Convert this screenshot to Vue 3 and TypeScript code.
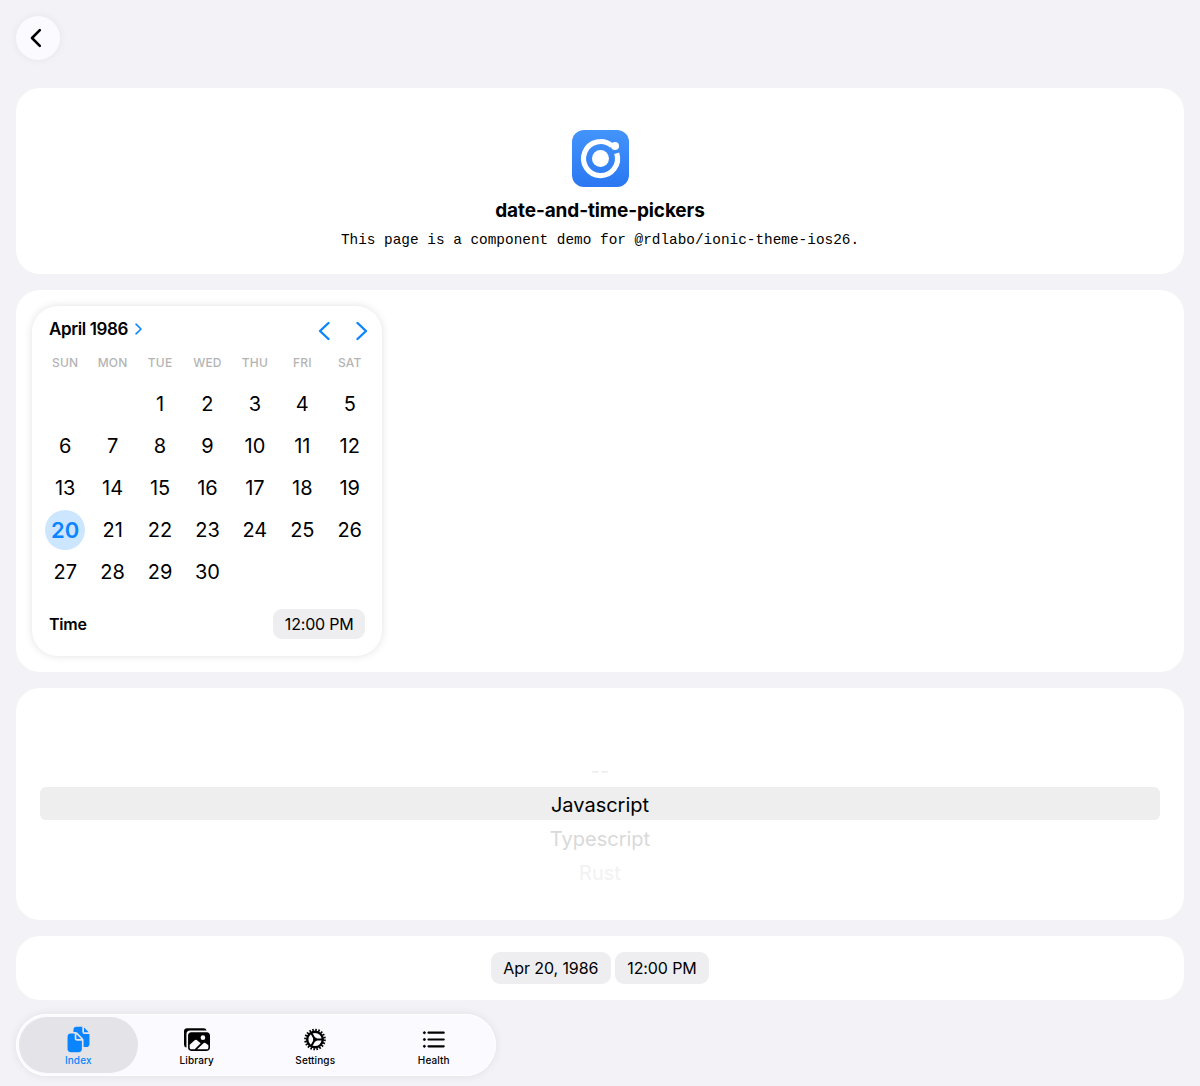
<script setup lang="ts">
const weekdays = ['SUN', 'MON', 'TUE', 'WED', 'THU', 'FRI', 'SAT']
const blanks = [1, 2]
const days = Array.from({ length: 30 }, (_, i) => i + 1)
const options = [
  { label: '--', cls: 'opt--dash' },
  { label: 'Javascript', cls: 'opt--active' },
  { label: 'Typescript', cls: 'opt--near' },
  { label: 'Rust', cls: 'opt--far' },
]
</script>

<template>
  <div class="page">
    <header class="toolbar">
      <button class="back" aria-label="Back">
        <svg viewBox="0 0 24 24" width="24" height="24" fill="none" stroke="#000" stroke-width="2.600" stroke-linecap="round" stroke-linejoin="round">
          <path d="M13.800 4.200 6 12l7.800 7.800" />
        </svg>
      </button>
    </header>

    <main class="content">
      <section class="card hero">
        <svg class="logo" viewBox="0 0 57 57" width="57" height="57">
          <defs>
            <linearGradient id="logo-bg" x1="0" y1="0" x2="0" y2="1">
              <stop offset="0" stop-color="#4394fb" />
              <stop offset="1" stop-color="#2a77f2" />
            </linearGradient>
          </defs>
          <rect width="57" height="57" rx="12" fill="url(#logo-bg)" />
          <path d="M39.900 15.900A17 17 0 1 0 44.700 23.250" fill="none" stroke="#fff" stroke-width="5.200" />
          <circle cx="28.500" cy="28.500" r="8.500" fill="#fff" />
          <circle cx="43" cy="16" r="4" fill="#fff" />
        </svg>
        <h1>date-and-time-pickers</h1>
        <p>This page is a component demo for @rdlabo/ionic-theme-ios26.</p>
      </section>

      <section class="card datetime-card">
        <div class="datetime">
          <div class="cal-head">
            <div class="month">
              April 1986
              <svg viewBox="0 0 10 14" width="10" height="14" fill="none" stroke="#0a84ff" stroke-width="1.600" stroke-linecap="round" stroke-linejoin="round">
                <path d="M2 2.200 7 7l-5 4.800" />
              </svg>
            </div>
            <div class="arrows">
              <svg viewBox="0 0 14 20" width="14" height="20" fill="none" stroke="#0a84ff" stroke-width="2.400" stroke-linecap="round" stroke-linejoin="round">
                <path d="M11.500 2 3 10l8.500 8" />
              </svg>
              <svg viewBox="0 0 14 20" width="14" height="20" fill="none" stroke="#0a84ff" stroke-width="2.400" stroke-linecap="round" stroke-linejoin="round">
                <path d="M2.500 2 11 10l-8.500 8" />
              </svg>
            </div>
          </div>
          <div class="weekdays">
            <span v-for="d in weekdays" :key="d">{{ d }}</span>
          </div>
          <div class="days">
            <span v-for="b in blanks" :key="'b' + b" />
            <span v-for="d in days" :key="d" class="day" :class="{ 'day--active': d === 20 }">
              <i>{{ d }}</i>
            </span>
          </div>
          <div class="time-row">
            <span class="time-label">Time</span>
            <span class="chip chip--small">12:00 PM</span>
          </div>
        </div>
      </section>

      <section class="card picker-card">
        <div class="picker">
          <div v-for="o in options" :key="o.label" class="opt" :class="o.cls">{{ o.label }}</div>
        </div>
      </section>

      <section class="card chips">
        <span class="chip">Apr 20, 1986</span>
        <span class="chip">12:00 PM</span>
      </section>
    </main>

    <nav class="tabbar">
      <div class="tab tab--active">
        <svg viewBox="0 0 512 512" width="27" height="27" fill="currentColor">
          <path d="M298.390 248a4 4 0 002.860-6.800l-78.400-79.720a4 4 0 00-6.850 2.810V236a12 12 0 0012 12z" />
          <path d="M197 267a43.670 43.670 0 01-13-31v-92h-72a64.190 64.190 0 00-64 64v224a64 64 0 0064 64h144a64 64 0 0064-64V280h-92a43.610 43.610 0 01-31-13zM372 120h70.390a4 4 0 002.860-6.800l-78.400-79.720a4 4 0 00-6.850 2.810V108a12 12 0 0012 12z" />
          <path d="M372 152a44.340 44.340 0 01-44-44V16H220a60.070 60.070 0 00-60 60v36h42.120A40.810 40.810 0 01231 124.140l109.160 111a41.110 41.110 0 0111.830 29V400h53.050c32.510 0 58.950-26.920 58.950-60V152z" />
        </svg>
        <span>Index</span>
      </div>
      <div class="tab">
        <svg viewBox="0 0 512 512" width="26" height="26" fill="currentColor">
          <path d="M450.290 112H142c-34 0-62 27.510-62 61.330v245.340c0 33.820 28 61.330 62 61.330h308c34 0 62-26.180 62-60V173.330c0-33.820-27.670-61.330-61.710-61.330zm-77.150 61.340a46 46 0 11-46.280 46 46.190 46.190 0 0146.280-46zm-231.550 276c-17 0-29.860-13.750-29.860-30.660v-59.510l92.310-82.050a46.220 46.220 0 0163.270 1.780L328 329.580 211.280 449.340zM480 418.670c0 16.910-11.290 30.670-28.340 30.670H259l117.130-116.690a45.820 45.820 0 0159-.15L480 370.330z" />
          <path d="M384 32H64A64 64 0 000 96v256a64.110 64.110 0 0048 62V152a72 72 0 0172-72h326a64.110 64.110 0 00-62-48z" />
        </svg>
        <span>Library</span>
      </div>
      <div class="tab">
        <svg viewBox="0 0 24 24" width="24" height="24" fill="none" stroke="currentColor">
          <circle cx="12" cy="12" r="9.600" stroke-width="2.400" stroke-dasharray="1.550 1.464" />
          <circle cx="12" cy="12" r="7.800" stroke-width="2.400" />
          <circle cx="12" cy="12" r="2" fill="currentColor" stroke="none" />
          <path d="M12 12V4.500M12 12l6.500 3.700M12 12l-6.500 3.700" stroke-width="2" transform="rotate(90 12 12)" />
        </svg>
        <span>Settings</span>
      </div>
      <div class="tab">
        <svg viewBox="0 0 24 24" width="24" height="24" fill="currentColor" stroke="currentColor">
          <path d="M6.500 5.200h15.200M6.500 12h15.200M6.500 18.800h15.200" fill="none" stroke-width="2.200" stroke-linecap="round" />
          <circle cx="2.400" cy="5.200" r="1" />
          <circle cx="2.400" cy="12" r="1" />
          <circle cx="2.400" cy="18.800" r="1" />
        </svg>
        <span>Health</span>
      </div>
    </nav>
  </div>
</template>

<style>
html,
body {
  margin: 0;
  background: #f2f2f7;
}
</style>

<style scoped>
.page {
  width: 1200px;
  height: 1086px;
  overflow: hidden;
  background: #f2f2f7;
  color: #000;
  font-family: Inter, "Liberation Sans", sans-serif;
  box-sizing: border-box;
  padding: 16px 16px 0;
}

.toolbar {
  height: 44px;
  margin-bottom: 28px;
}

.back {
  width: 44px;
  height: 44px;
  padding: 0;
  border: 0;
  border-radius: 50%;
  background: #fafaff;
  box-shadow: 0 0 8px rgb(0 0 0 / 6%);
  display: flex;
  align-items: center;
  justify-content: center;
}

.content {
  display: flex;
  flex-direction: column;
  gap: 16px;
}

.card {
  background: #fff;
  border-radius: 24px;
}

.hero {
  height: 186px;
  box-sizing: border-box;
  padding-top: 42px;
  display: flex;
  flex-direction: column;
  align-items: center;
}

.logo {
  display: block;
}

.hero h1 {
  margin: 12px 0 0;
  font-size: 19px;
  line-height: 24px;
  font-weight: 700;
  letter-spacing: -0.12px;
}

.hero p {
  margin: 8px 0 0;
  font-family: "Liberation Mono", monospace;
  font-size: 14.400px;
  line-height: 18px;
}

.datetime-card {
  height: 382px;
  box-sizing: border-box;
  padding: 16px;
}

.datetime {
  width: 350px;
  height: 350px;
  box-sizing: border-box;
  border-radius: 26px;
  background: #fff;
  box-shadow: 0 0 8px rgb(0 0 0 / 12%);
  padding: 0 9.500px;
}

.cal-head {
  height: 48px;
  padding: 0 3.500px 0 7.500px;
  display: flex;
  align-items: center;
  justify-content: space-between;
}

.month {
  display: flex;
  align-items: center;
  gap: 6px;
  font-size: 17px;
  font-weight: 600;
  letter-spacing: -0.4px;
  margin-top: -2px;
}

.arrows {
  display: flex;
  gap: 24px;
  margin-top: 2px;
}

.weekdays,
.days {
  display: grid;
  grid-template-columns: repeat(7, 47.430px);
}

.weekdays {
  height: 20px;
  margin-top: -2px;
  align-items: center;
  text-align: center;
  font-size: 12px;
  font-weight: 500;
  color: #b4b4b4;
  letter-spacing: 0.2px;
}

.days {
  margin-top: 11px;
  grid-auto-rows: 42px;
}

.day {
  display: flex;
  align-items: center;
  justify-content: center;
  font-size: 20px;
}

.day i {
  font-style: normal;
  width: 40px;
  height: 40px;
  border-radius: 50%;
  display: flex;
  align-items: center;
  justify-content: center;
}

.day--active i {
  background: #cde6ff;
  color: #0a84ff;
  font-size: 22px;
  font-weight: 600;
}

.time-row {
  margin-top: 16px;
  padding: 0 7.500px;
  display: flex;
  align-items: center;
  justify-content: space-between;
}

.time-label {
  font-size: 16px;
  font-weight: 600;
  letter-spacing: -0.2px;
}

.chip {
  display: inline-flex;
  align-items: center;
  justify-content: center;
  height: 32px;
  padding: 0 12.500px;
  border-radius: 9px;
  background: #eeeef0;
  font-size: 16px;
  letter-spacing: -0.1px;
}

.chip--small {
  height: 30px;
  padding: 0 11.500px;
  letter-spacing: -0.2px;
}

.picker-card {
  height: 232px;
  box-sizing: border-box;
  padding: 65px 24px 0;
}

.picker {
  display: flex;
  flex-direction: column;
  align-items: center;
}

.opt {
  height: 34px;
  line-height: 34px;
  font-size: 20px;
  text-align: center;
  width: 100%;
}

.opt--dash {
  line-height: 36px;
  color: #eee;
}

.opt--active {
  height: 33px;
  line-height: 36px;
  background: #eeeeee;
  border-radius: 6px;
}

.opt--near {
  margin-top: 2px;
  color: #d9d9d9;
}

.opt--far {
  color: #f2f2f2;
}

.chips {
  height: 64px;
  display: flex;
  align-items: center;
  justify-content: center;
  gap: 4px;
}

.tabbar {
  position: absolute;
  left: 16px;
  top: 1014px;
  width: 480px;
  height: 62px;
  box-sizing: border-box;
  padding: 3px;
  display: grid;
  grid-template-columns: repeat(4, 118.500px);
  border-radius: 31px;
  background: #fafaff;
  box-shadow: 0 0 10px rgb(0 0 0 / 8%), inset 0 0 0 1px #fff;
}

.tab {
  display: flex;
  flex-direction: column;
  align-items: center;
  font-size: 10px;
  font-weight: 500;
  line-height: 12px;
  border-radius: 28px;
  color: #000;
  padding-top: 9px;
}

.tab svg {
  height: 27px;
  display: block;
}

.tab span {
  display: block;
  margin-top: 1px;
  letter-spacing: 0.1px;
}

.tab--active {
  background: #e3e3e8;
  color: #0a84ff;
}
</style>
